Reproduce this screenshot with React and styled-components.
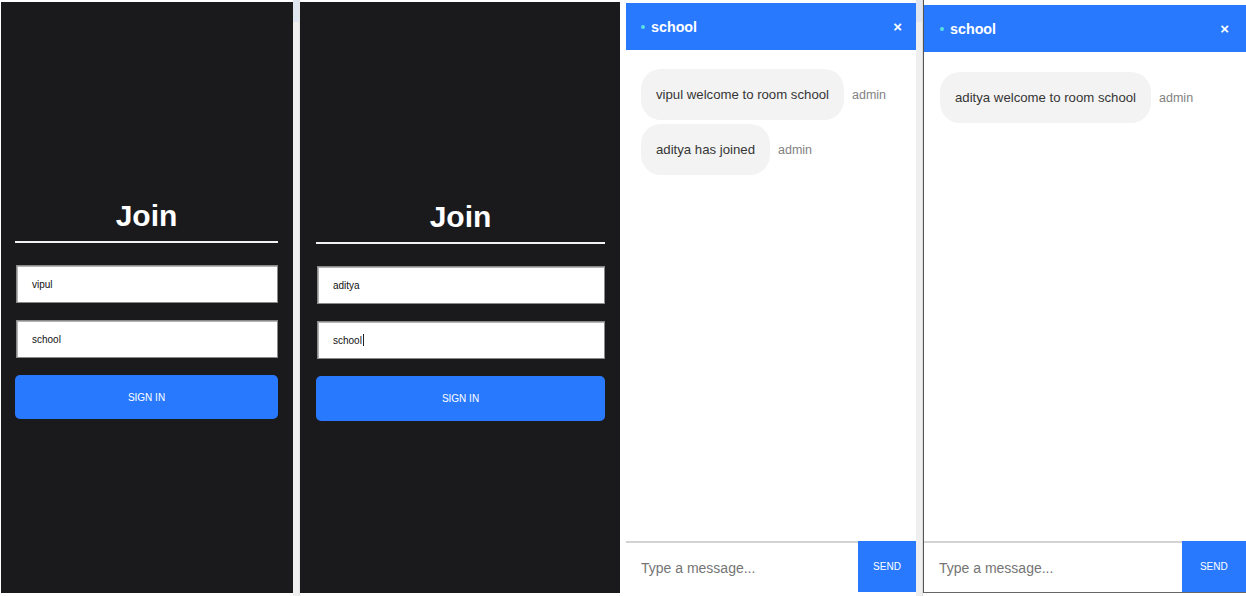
import React from "react";
import styled, { createGlobalStyle } from "styled-components";

const GlobalStyle = createGlobalStyle`
  html, body {
    margin: 0;
    background: #fff;
    font-family: "Liberation Sans", Arial, sans-serif;
  }
`;

const Screen = styled.div`
  display: flex;
  align-items: flex-start;
  width: 1246px;
  height: 596px;
  padding-left: 1px;
  box-sizing: border-box;
  overflow: hidden;
  background: #fff;
`;

/* window chrome between the captured browser windows */
const Gutter = styled.div`
  flex-shrink: 0;
  width: ${(p) => p.$width}px;
  height: 596px;
  background: linear-gradient(#dfe6f1 0, #dfe6f1 22px, #efefef 22px);
  border-right: 1px solid ${(p) => p.$edge || "#e3e3e3"};
  box-sizing: border-box;
`;

const Spacer = styled.div`
  flex-shrink: 0;
  width: ${(p) => p.$width}px;
`;

/* ---------- join screen ---------- */

const JoinOuter = styled.div`
  flex-shrink: 0;
  width: ${(p) => p.$width}px;
  height: 591px;
  margin-top: 2px;
  padding: ${(p) => p.$top}px 15px 0 ${(p) => p.$left}px;
  box-sizing: border-box;
  background: #1a1a1d;
  display: flex;
  flex-direction: column;
`;

const Heading = styled.h1`
  margin: 0;
  padding-bottom: 7px;
  border-bottom: 2px solid #f2f2f2;
  color: #fff;
  font-size: 30px;
  font-weight: 700;
  line-height: 36px;
  text-align: center;
`;

const Field = styled.div`
  display: flex;
  align-items: center;
  height: 38px;
  margin-top: ${(p) => p.$gap}px;
  margin-left: 1px;
  padding-left: 15px;
  box-sizing: border-box;
  background: #fff;
  border: 1px solid #8a8a8a;
  box-shadow: inset 1px 1px 0 #b4b4b4;
  color: #111;
  font-size: 10px;
`;

const Caret = styled.span`
  display: inline-block;
  width: 1px;
  height: 12px;
  margin-left: 1px;
  background: #222;
`;

const SignInButton = styled.button`
  height: ${(p) => p.$height}px;
  margin-top: 17px;
  border: none;
  border-radius: 5px;
  background: #2979ff;
  color: #fff;
  font-family: inherit;
  font-size: 10px;
  text-transform: uppercase;
`;

const JoinPanel = ({ width, left, top, buttonHeight, name, room, caret }) => (
  <JoinOuter $width={width} $left={left} $top={top}>
    <Heading>Join</Heading>
    <Field $gap={22}>{name}</Field>
    <Field $gap={17}>
      {room}
      {caret && <Caret />}
    </Field>
    <SignInButton $height={buttonHeight}>Sign In</SignInButton>
  </JoinOuter>
);

/* ---------- chat screen ---------- */

const Frame = styled.div`
  flex-shrink: 0;
  padding-top: ${(p) => p.$top}px;
  border-left: ${(p) => (p.$bordered ? "1px solid #555" : "none")};
  border-bottom: ${(p) => (p.$bordered ? "1px solid #666" : "none")};
  background: #fff;
`;

const ChatBox = styled.div`
  width: ${(p) => p.$width}px;
  height: ${(p) => p.$height}px;
  display: flex;
  flex-direction: column;
  background: #fff;
`;

const Header = styled.div`
  height: 47px;
  flex-shrink: 0;
  display: flex;
  align-items: center;
  justify-content: space-between;
  padding: 0 ${(p) => p.$right}px 0 ${(p) => p.$left}px;
  background: #2979ff;
  color: #fff;
`;

const RoomName = styled.div`
  display: flex;
  align-items: center;
  font-size: 14.3px;
  font-weight: 700;
`;

const OnlineDot = styled.span`
  width: 4px;
  height: 4px;
  margin-right: 6px;
  border-radius: 50%;
  background: #5ce0df;
`;

const Close = styled.span`
  font-size: 15px;
  font-weight: 700;
  line-height: 1;
`;

const Messages = styled.div`
  flex: 1;
  display: flex;
  flex-direction: column;
  align-items: flex-start;
  gap: 4px;
  padding: ${(p) => p.$top}px 15px 0 ${(p) => p.$left}px;
`;

const MessageRow = styled.div`
  display: flex;
  align-items: center;
`;

const Bubble = styled.div`
  display: flex;
  align-items: center;
  height: 51px;
  padding: 0 15px;
  border-radius: 20px;
  background: #f3f3f3;
  color: #353535;
  font-size: 13.2px;
`;

const Sender = styled.span`
  margin-left: 8px;
  color: #828282;
  font-size: 12.5px;
`;

const Composer = styled.form`
  height: 51px;
  flex-shrink: 0;
  display: flex;
  margin: 0;
`;

const MessageInput = styled.input`
  flex: 1;
  min-width: 0;
  padding: 0 15px;
  border: none;
  border-top: 2px solid #d3d3d3;
  outline: none;
  font-family: inherit;
  font-size: 14px;
  color: #333;

  &::placeholder {
    color: #757575;
  }
`;

const SendButton = styled.button`
  width: 20%;
  border: none;
  background: #2979ff;
  color: #fff;
  font-family: inherit;
  font-size: 10px;
  text-transform: uppercase;
`;

const ChatPanel = ({ width, height, left, right, listTop, messages }) => (
  <ChatBox $width={width} $height={height}>
    <Header $left={left} $right={right}>
      <RoomName>
        <OnlineDot />
        school
      </RoomName>
      <Close>×</Close>
    </Header>
    <Messages $top={listTop} $left={left}>
      {messages.map((m) => (
        <MessageRow key={m.text}>
          <Bubble>{m.text}</Bubble>
          <Sender>{m.user}</Sender>
        </MessageRow>
      ))}
    </Messages>
    <Composer onSubmit={(e) => e.preventDefault()}>
      <MessageInput placeholder="Type a message..." />
      <SendButton type="submit">Send</SendButton>
    </Composer>
  </ChatBox>
);

const vipulMessages = [
  { text: "vipul welcome to room school", user: "admin" },
  { text: "aditya has joined", user: "admin" },
];

const adityaMessages = [{ text: "aditya welcome to room school", user: "admin" }];

export default function App() {
  return (
    <>
      <GlobalStyle />
      <Screen>
        <JoinPanel width={292} left={14} top={196} buttonHeight={44} name="vipul" room="school" />
        <Gutter $width={7} />
        <JoinPanel width={320} left={16} top={197} buttonHeight={45} name="aditya" room="school" caret />
        <Spacer $width={6} />
        <Frame $top={3}>
          <ChatPanel
            width={290}
            height={589}
            left={15}
            right={14}
            listTop={19}
            messages={vipulMessages}
          />
        </Frame>
        <Gutter $width={7} $edge="#dcdcdc" />
        <Frame $top={5} $bordered>
          <ChatPanel
            width={322}
            height={587}
            left={16}
            right={17}
            listTop={20}
            messages={adityaMessages}
          />
        </Frame>
      </Screen>
    </>
  );
}
